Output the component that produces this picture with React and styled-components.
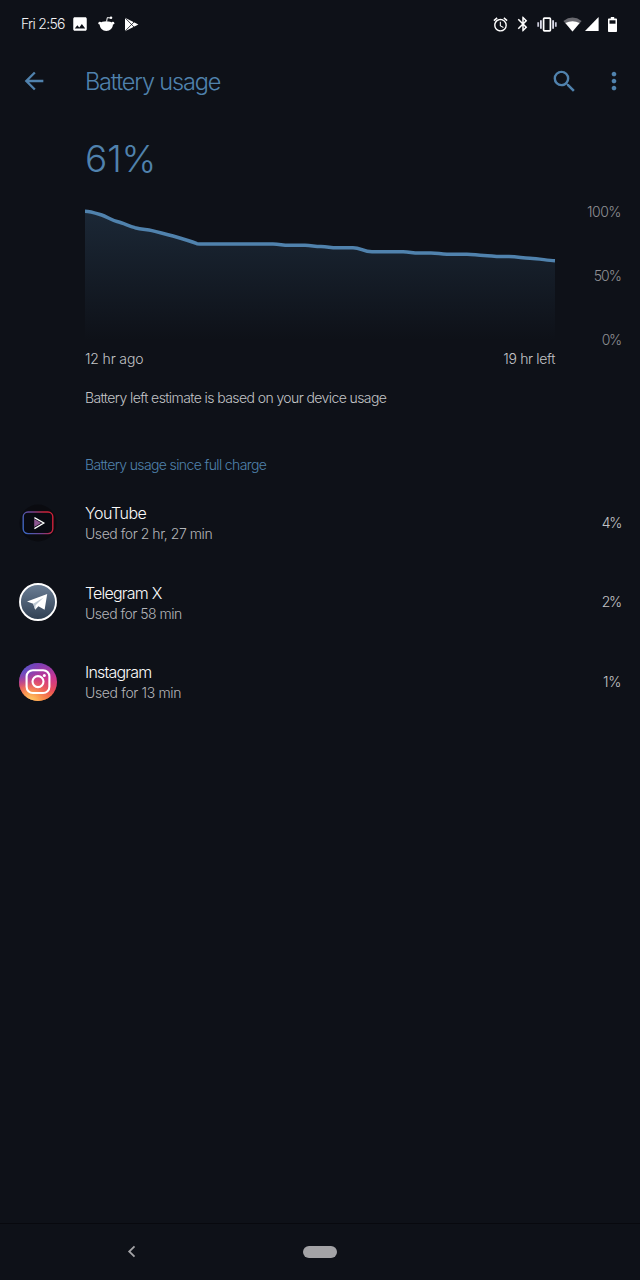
import React from 'react';
import styled, { createGlobalStyle } from 'styled-components';
import { MdArrowBack, MdSearch, MdMoreVert, MdImage, MdAlarm, MdBluetooth } from 'react-icons/md';

const accent = '#5082ad';

const GlobalStyle = createGlobalStyle`
  * { box-sizing: border-box; }
  body {
    margin: 0;
    background: #0e1118;
    font-family: Inter, "Liberation Sans", sans-serif;
    font-weight: 300;
    -webkit-font-smoothing: antialiased;
  }
`;

const Screen = styled.div`
  display: flex;
  flex-direction: column;
  width: 640px;
  height: 1280px;
  overflow: hidden;
`;

const Label = styled.span`
  display: block;
  white-space: nowrap;
  font-size: ${(p) => p.$size || 14}px;
  line-height: ${(p) => p.$line || 20}px;
  letter-spacing: ${(p) => p.$track || 0}px;
  color: ${(p) => p.$color || '#c3c4c7'};
  font-weight: ${(p) => p.$weight || 300};
`;

const StatusBar = styled.header`
  display: flex;
  justify-content: space-between;
  height: 48px;
  padding: 0 23px 0 21px;
  color: #fff;
`;

const StatusGroup = styled.div`
  display: flex;
  align-items: center;
  svg { display: block; flex: none; }
`;

const ClockText = styled(Label)`
  width: 50px;
`;

const Gap = styled.i`
  width: ${(p) => p.$w}px;
`;

const AppBar = styled.div`
  display: flex;
  align-items: center;
  height: 66px;
  padding: 0 12px 0 20px;
  color: ${accent};
  svg { display: block; flex: none; }
`;

const Title = styled(Label)`
  flex: 1;
  margin-left: 37px;
  padding-top: 2px;
`;

const Summary = styled.section`
  padding: 23px 19px 0 85px;
`;

const ChartRow = styled.div`
  display: flex;
  justify-content: space-between;
  height: 144px;
  margin-top: 23px;
`;

const ChartArea = styled.svg`
  display: block;
  width: 471px;
  height: 144px;
`;

const Scale = styled.div`
  display: flex;
  flex-direction: column;
  justify-content: space-between;
  align-items: flex-end;
`;

const TimeRange = styled.div`
  display: flex;
  justify-content: space-between;
  width: 470px;
  margin-top: 1px;
`;

const Estimate = styled(Label)`
  margin-top: 19px;
`;

const SectionTitle = styled(Label)`
  margin: 47px 0 8px 85px;
`;

const AppRow = styled.div`
  display: flex;
  align-items: center;
  height: 79.5px;
  padding: 0 19px;
  svg { display: block; width: 38px; height: 38px; flex: none; }
`;

const AppText = styled.div`
  flex: 1;
  margin-left: 28px;
  padding-top: 2px;
`;

const NavBar = styled.nav`
  display: flex;
  align-items: center;
  height: 57px;
  margin-top: auto;
  padding: 0 0 1px 127px;
  border-top: 1px solid #08090e;
`;

const HomePill = styled.div`
  width: 34px;
  height: 12px;
  margin-left: 167px;
  border-radius: 6px;
  background: #a3a3a6;
`;

const RedditIcon = () => (
  <svg width="17" height="16" viewBox="0 0 17 16">
    <path d="M1.6 7.6C4 4.6 12.6 4.6 15 7.6C15 12.4 12 15 8.3 15S1.6 12.4 1.6 7.6Z" fill="#fff" />
    <circle cx="1.8" cy="7.2" r="1.4" fill="#fff" />
    <circle cx="14.9" cy="7.2" r="1.4" fill="#fff" />
    <path d="M8.6 5.5 9.3 1.6 12.4 2" fill="none" stroke="#fff" strokeWidth="1" />
    <circle cx="13" cy="1.8" r="1.3" fill="#fff" />
  </svg>
);

const PlayStoreIcon = () => (
  <svg width="15" height="15" viewBox="0 0 15 15">
    <path d="M1 .8 14.4 7.5 1 14.2Z" fill="#fff" />
    <path d="M1 .8 10.8 10.8M1 14.2 10.8 4.2" stroke="#0e1118" strokeWidth=".8" />
  </svg>
);

const VibrateIcon = () => (
  <svg width="20" height="15" viewBox="0 0 20 15" fill="none">
    <rect x="6.6" y="1.2" width="6.8" height="12.6" rx=".8" stroke="#fff" strokeWidth="1.7" />
    <path d="M3.9 3.3v8.4M16.1 3.3v8.4" stroke="#dcdcea" strokeWidth="1.8" />
    <path d="M1.2 5.3v4.4M18.8 5.3v4.4" stroke="#c8c8d8" strokeWidth="1.8" />
  </svg>
);

const WifiIcon = () => (
  <svg width="19" height="15" viewBox="0 0 19 15">
    <path d="M.4 4Q9.5-2.8 18.6 4L9.5 14.6Z" fill="#69696f" />
    <path d="M2.4 6Q9.5 2.4 16.6 6L9.5 14.6Z" fill="#fff" />
  </svg>
);

const SignalIcon = () => (
  <svg width="14" height="14" viewBox="0 0 14 14">
    <path d="M0 14H13.6V0Z" fill="#fff" />
  </svg>
);

const BatteryIcon = () => (
  <svg width="9" height="15" viewBox="0 0 9 15">
    <path d="M2.8 0h3.4v1.4h2Q9 1.4 9 2.2v12Q9 15 8.2 15H.8Q0 15 0 14.2v-12Q0 1.4.8 1.4h2Z" fill="#fff" />
    <path d="M1.5 3.3h6v3.4h-6Z" fill="#0e1118" />
  </svg>
);

const YouTubeIcon = () => (
  <svg viewBox="0 0 38 38">
    <defs>
      <linearGradient id="yt" x1="0" y1=".6" x2="1" y2=".3">
        <stop offset="0" stopColor="#3e63bd" />
        <stop offset=".45" stopColor="#74428f" />
        <stop offset=".8" stopColor="#c5243e" />
        <stop offset="1" stopColor="#d02038" />
      </linearGradient>
    </defs>
    <circle cx="19" cy="19" r="18.5" fill="#0a0b10" />
    <rect x="4.2" y="8" width="29.6" height="21.6" rx="4.8" fill="#090a12" stroke="url(#yt)" strokeWidth="1.4" />
    <path d="M15.2 15v8l7-4Z" fill="#8b568f" />
    <path d="M15.4 13.6 24.8 19 15.4 24.6" fill="none" stroke="#fff" strokeWidth="1.3" />
  </svg>
);

const TelegramIcon = () => (
  <svg viewBox="0 0 38 38">
    <defs>
      <linearGradient id="tg" x1="0" y1="0" x2="0" y2="1">
        <stop offset="0" stopColor="#6c7f96" />
        <stop offset="1" stopColor="#2f3f52" />
      </linearGradient>
    </defs>
    <circle cx="19" cy="19" r="18" fill="url(#tg)" stroke="#fff" strokeWidth="1.9" />
    <path d="M8 18.6 28.2 11 25.6 26.8 19.4 23.3 16.2 26.8 14.2 20.8Z" fill="#fff" />
    <path d="M14.2 20.8 24.6 14.4 16.6 22.2 16.2 26.8Z" fill="#bdc8d3" />
  </svg>
);

const InstagramIcon = () => (
  <svg viewBox="0 0 38 38">
    <defs>
      <linearGradient id="ig" x1=".35" y1="0" x2=".5" y2="1">
        <stop offset="0" stopColor="#7440b8" />
        <stop offset=".45" stopColor="#c93591" />
        <stop offset=".8" stopColor="#e84c5a" />
        <stop offset="1" stopColor="#fa8a3c" />
      </linearGradient>
      <radialGradient id="igWarm" cx=".3" cy="1.02" r=".75">
        <stop offset="0" stopColor="#ffd569" />
        <stop offset=".35" stopColor="#fca050" stopOpacity=".9" />
        <stop offset="1" stopColor="#ee4c52" stopOpacity="0" />
      </radialGradient>
      <radialGradient id="igCool" cx=".05" cy=".1" r=".55">
        <stop offset="0" stopColor="#4b61d2" />
        <stop offset="1" stopColor="#7440c0" stopOpacity="0" />
      </radialGradient>
    </defs>
    <circle cx="19" cy="19" r="19" fill="url(#ig)" />
    <circle cx="19" cy="19" r="19" fill="url(#igWarm)" />
    <circle cx="19" cy="19" r="19" fill="url(#igCool)" />
    <g fill="none" stroke="#fff" strokeWidth="2.1">
      <rect x="7.6" y="7.2" width="22.8" height="22.8" rx="6.3" />
      <circle cx="19" cy="18.6" r="5.5" />
    </g>
    <circle cx="25.3" cy="12.4" r="1.5" fill="#fff" />
  </svg>
);

const line =
  'M0 15.3C5 15.4 11 17.3 16 18.8C22 20.7 26 24 32 25.5C38 27 43 29.5 50 31.7C57 33.6 61 33.3 67 34.6C74 36.5 80 37.8 88 40C97 42.6 105 45 112 47.7C115 48.1 118 48 122 48H188C195 48 197 49.3 204 49.3H220C227 49.3 229 50.5 236 50.5C243 50.5 245 51.8 252 51.8H268C276 51.8 278 55.8 287 55.8H318C325 55.8 327 57 334 57H346C353 57 355 58.2 362 58.2H382C389 58.2 392 59.4 399 59.4C406 59.4 408 60.6 416 60.6H424C433 60.8 437 61.9 445 62.2C455 62.6 462 64.5 470 64.8';

const Chart = () => (
  <ChartArea viewBox="0 8 471 144">
    <defs>
      <linearGradient id="area" gradientUnits="userSpaceOnUse" x1="0" y1="16" x2="0" y2="144">
        <stop offset="0" stopColor={accent} stopOpacity=".2" />
        <stop offset=".5" stopColor={accent} stopOpacity=".1" />
        <stop offset="1" stopColor={accent} stopOpacity="0" />
      </linearGradient>
    </defs>
    <path d={`${line}V144H0Z`} fill="url(#area)" />
    <path d={line} fill="none" stroke={accent} strokeWidth="3.5" />
  </ChartArea>
);

const apps = [
  { name: 'YouTube', track: -0.5, used: 'Used for 2 hr, 27 min', usedTrack: -0.45, share: '4%', shareTrack: -1.3, Icon: YouTubeIcon },
  { name: 'Telegram X', track: -0.8, used: 'Used for 58 min', usedTrack: -0.5, share: '2%', shareTrack: -1.2, Icon: TelegramIcon },
  { name: 'Instagram', track: -0.8, used: 'Used for 13 min', usedTrack: -0.35, share: '1%', shareTrack: -0.3, Icon: InstagramIcon },
];

export default function App() {
  return (
    <>
      <GlobalStyle />
      <Screen>
        <StatusBar>
          <StatusGroup>
            <ClockText $color="#f2f2f4" $track={-0.7}>Fri 2:56</ClockText>
            <MdImage size={18} />
            <Gap $w={9} />
            <RedditIcon />
            <Gap $w={9} />
            <PlayStoreIcon />
          </StatusGroup>
          <StatusGroup>
            <MdAlarm size={17} />
            <Gap $w={5} />
            <MdBluetooth size={18} />
            <Gap $w={5} />
            <VibrateIcon />
            <Gap $w={6} />
            <WifiIcon />
            <Gap $w={3} />
            <SignalIcon />
            <Gap $w={9} />
            <BatteryIcon />
          </StatusGroup>
        </StatusBar>
        <AppBar>
          <MdArrowBack size={28} />
          <Title $size={23.5} $line={30} $track={-1.15} $color={accent}>Battery usage</Title>
          <MdSearch size={29} />
          <Gap $w={21} />
          <MdMoreVert size={28} />
        </AppBar>
        <Summary>
          <Label $size={37} $line={44} $track={-0.1} $color={accent}>61%</Label>
          <ChartRow>
            <Chart />
            <Scale>
              <Label $line={16} $track={-0.5} $color="#8e9094">100%</Label>
              <Label $line={16} $track={-0.9} $color="#8e9094">50%</Label>
              <Label $line={16} $track={-1.2} $color="#8e9094">0%</Label>
            </Scale>
          </ChartRow>
          <TimeRange>
            <Label $track={-0.15}>12 hr ago</Label>
            <Label $track={-0.35}>19 hr left</Label>
          </TimeRange>
          <Estimate $track={-0.59}>Battery left estimate is based on your device usage</Estimate>
        </Summary>
        <SectionTitle $track={-0.63} $color={accent}>Battery usage since full charge</SectionTitle>
        {apps.map(({ name, track, used, usedTrack, share, shareTrack, Icon }) => (
          <AppRow key={name}>
            <Icon />
            <AppText>
              <Label $size={16} $line={21} $track={track} $color="#fafafa">{name}</Label>
              <Label $track={usedTrack} $color="#b4b5b9">{used}</Label>
            </AppText>
            <Label $track={shareTrack}>{share}</Label>
          </AppRow>
        ))}
        <NavBar>
          <svg width="9" height="13" viewBox="0 0 9 13">
            <path d="M7.5 1.3 2.2 6.5 7.5 11.7" fill="none" stroke="#a3a3a6" strokeWidth="1.8" />
          </svg>
          <HomePill />
        </NavBar>
      </Screen>
    </>
  );
}
